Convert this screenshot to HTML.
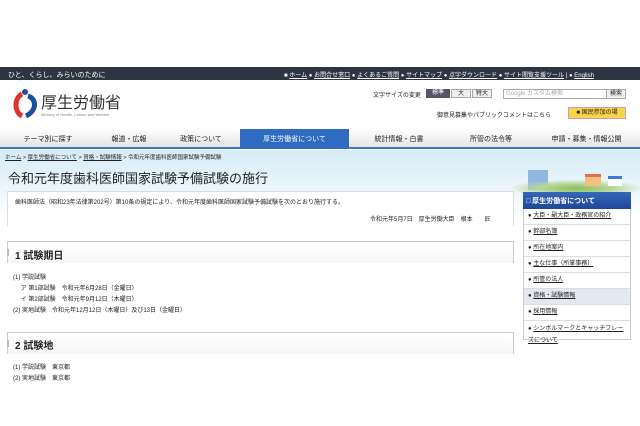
<!DOCTYPE html><html><head><meta charset="utf-8"><style>
*{margin:0;padding:0;box-sizing:border-box}
body{width:640px;height:426px;background:#fff;font-family:"Liberation Sans","Noto Sans CJK JP",sans-serif;position:relative;overflow:hidden;color:#222}
.a{position:absolute;white-space:nowrap}
.s{font-size:6px}
a,.u{color:#3344aa;text-decoration:underline}
</style></head><body>
<div class="a" style="left:0;top:67px;width:640px;height:13px;background:#2c3540"></div>
<div class="a s" style="left:8px;top:70px;color:#fff;font-size:7px">ひと、くらし、みらいのために</div>
<div class="a s" style="left:284px;top:70px;color:#fff;font-size:6px">■ <u>ホーム</u> ● <u>お問合せ窓口</u> ● <u>よくあるご質問</u> ● <u>サイトマップ</u> ● <u>点字ダウンロード</u> ● <u>サイト閲覧支援ツール</u> | ● <u>English</u></div>
<svg class="a" style="left:12px;top:88px" width="26" height="30"><path d="M10 6 C2 10 2 24 10 28" stroke="#d33" stroke-width="5" fill="none"/><path d="M16 8 C24 10 26 22 14 28" stroke="#1d4fa0" stroke-width="5" fill="none"/><circle cx="13" cy="4" r="3" fill="#1d4fa0"/></svg>
<div class="a" style="left:41px;top:89px;font-size:16px;color:#333">厚生労働省</div>
<div class="a" style="left:41px;top:112px;font-size:4px;color:#888">Ministry of Health, Labour and Welfare</div>
<div class="a s" style="left:373px;top:90px">文字サイズの変更</div>
<div class="a s" style="left:426px;top:89px;width:24px;height:9px;background:#556;color:#fff;text-align:center;line-height:9px">標準</div>
<div class="a s" style="left:451px;top:89px;width:20px;height:9px;background:#eee;border:1px solid #aaa;text-align:center;line-height:8px">大</div>
<div class="a s" style="left:472px;top:89px;width:20px;height:9px;background:#eee;border:1px solid #aaa;text-align:center;line-height:8px">特大</div>
<div class="a s" style="left:503px;top:89px;width:104px;height:10px;border:1px solid #aaa;color:#aaa;line-height:8px;padding-left:2px">Google カスタム検索</div>
<div class="a s" style="left:606px;top:89px;width:20px;height:10px;background:#eee;border:1px solid #aaa;text-align:center;line-height:8px">検索</div>
<div class="a s" style="left:437px;top:110px">御意見募集やパブリックコメントはこちら</div>
<div class="a s" style="left:568px;top:107px;width:58px;height:12px;background:#f7d44a;border:1px solid #d9a;line-height:10px;text-align:center">■ 国民参加の場</div>
<div class="a" style="left:0;top:129px;width:640px;height:20px;background:linear-gradient(#fff,#e4e4e4);border-bottom:2px solid #3b78c4"></div>
<div class="a" style="left:240px;top:129px;width:109px;height:20px;background:#2f6bc0"></div>
<div class="a" style="top:134px;left:0;width:640px;font-size:7px;display:flex">
<span style="width:96px;text-align:center">テーマ別に探す</span><span style="width:66px;text-align:center">報道・広報</span><span style="width:78px;text-align:center">政策について</span><span style="width:109px;text-align:center;color:#fff">厚生労働省について</span><span style="width:100px;text-align:center">統計情報・白書</span><span style="width:84px;text-align:center">所管の法令等</span><span style="width:107px;text-align:center">申請・募集・情報公開</span></div>
<div class="a" style="left:0;top:150px;width:640px;height:70px;background:linear-gradient(#d6ebf6,#eef7fc 60%,#fff)"></div>
<div class="a" style="left:5px;top:153px;font-size:5.5px"><u>ホーム</u> &gt; <u>厚生労働省について</u> &gt; <u>資格・試験情報</u> &gt; 令和元年度歯科医師国家試験予備試験</div>
<div class="a" style="left:8px;top:168px;font-size:13px;color:#222">令和元年度歯科医師国家試験予備試験の施行</div>
<div class="a" style="left:7px;top:191px;width:507px;height:35px;background:#fff;border:1px solid #ddd;border-bottom:none"></div>
<div class="a s" style="left:15px;top:197px">歯科医師法（昭和23年法律第202号）第10条の規定により、令和元年度歯科医師国家試験予備試験を次のとおり施行する。</div>
<div class="a s" style="left:370px;top:214px">令和元年5月7日　厚生労働大臣　根本　　匠</div>
<div class="a" style="left:7px;top:241px;width:507px;height:22px;border:1px solid #ccc;border-bottom:none;background:linear-gradient(#fff,#f6f6f6)"></div>
<div class="a" style="left:7px;top:249px;width:2px;height:7px;background:#bbb"></div>
<div class="a" style="left:15px;top:247px;font-size:10px;font-weight:bold">1 試験期日</div>
<div class="a s" style="left:13px;top:273px;line-height:11px">(1) 学説試験<br>　 ア 第1部試験　令和元年6月28日（金曜日）<br>　 イ 第2部試験　令和元年9月12日（木曜日）<br>(2) 実地試験　令和元年12月12日（木曜日）及び13日（金曜日）</div>
<div class="a" style="left:7px;top:332px;width:507px;height:22px;border:1px solid #ccc;border-bottom:none;background:linear-gradient(#fff,#f6f6f6)"></div>
<div class="a" style="left:7px;top:340px;width:2px;height:7px;background:#bbb"></div>
<div class="a" style="left:15px;top:337px;font-size:10px;font-weight:bold">2 試験地</div>
<div class="a s" style="left:13px;top:363px;line-height:11px">(1) 学説試験　東京都<br>(2) 実地試験　東京都</div>
<div class="a" style="left:528px;top:170px;width:20px;height:20px;background:#8fb8e0"></div>
<div class="a" style="left:512px;top:180px;width:128px;height:14px;background:radial-gradient(ellipse at 50% 60%,#8bbf5c 0,#b7d79a 40%,transparent 75%)"></div>
<div class="a" style="left:585px;top:174px;width:16px;height:12px;background:#f0c080;border-top:3px solid #e07050"></div>
<div class="a" style="left:608px;top:176px;width:14px;height:10px;background:#fff;border-top:3px solid #3a7bd5"></div>
<div class="a" style="left:523px;top:192px;width:108px;height:148px;border:1px solid #ccd;background:#fff"></div>
<div class="a" style="left:523px;top:192px;width:108px;height:17px;background:linear-gradient(#3566b8,#1f4898);color:#fff;font-size:7px;font-weight:bold;padding:4px 0 0 3px">□ 厚生労働省について</div>
<div class="a" style="left:524px;top:209px;width:106px;font-size:6px;line-height:15px">
<div style="border-bottom:1px solid #ddd;padding-left:4px">● <u>大臣・副大臣・政務官の紹介</u></div>
<div style="border-bottom:1px solid #ddd;padding-left:4px">● <u>幹部名簿</u></div>
<div style="border-bottom:1px solid #ddd;padding-left:4px">● <u>所在地案内</u></div>
<div style="border-bottom:1px solid #ddd;padding-left:4px">● <u>主な仕事（所掌事務）</u></div>
<div style="border-bottom:1px solid #ddd;padding-left:4px">● <u>所管の法人</u></div>
<div style="border-bottom:1px solid #ddd;padding-left:4px;background:#e4e8f0">● <u>資格・試験情報</u></div>
<div style="border-bottom:1px solid #ddd;padding-left:4px">● <u>採用情報</u></div>
<div style="padding:2px 2px 0 4px;line-height:12px;white-space:normal">● <u>シンボルマークとキャッチフレーズについて</u></div>
</div>
</body></html>
